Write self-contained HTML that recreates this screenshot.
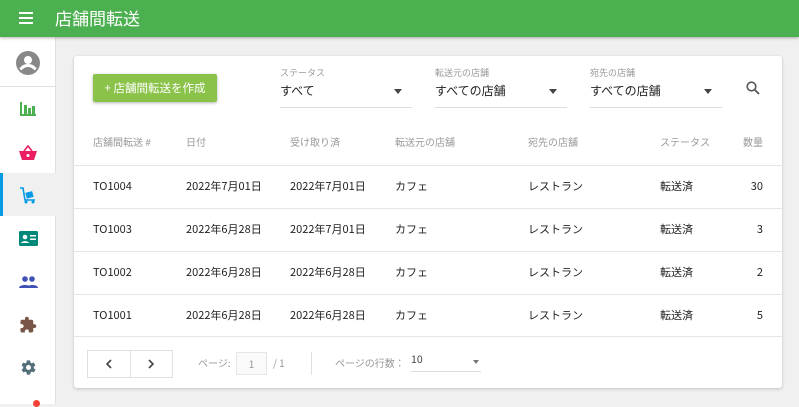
<!DOCTYPE html>
<html><head><meta charset="utf-8"><style>
*{box-sizing:border-box;margin:0;padding:0}
body{width:799px;height:404px;overflow:hidden;background:#f0f0f0;font-family:"Noto Sans CJK JP","Liberation Sans",sans-serif;position:relative;color:#333}
.hdr{position:absolute;left:0;top:0;width:799px;height:37px;background:#4caf50;box-shadow:0 1px 3px rgba(0,0,0,.3);z-index:2}
.hdr .t{position:absolute;left:55px;top:0;line-height:36px;color:#fff;font-size:17px}
.side{position:absolute;left:0;top:37px;width:56px;height:367px;background:#fff;border-right:1px solid #e0e0e0}
.si{position:absolute;left:0;width:56px;height:43px;display:flex;align-items:center;justify-content:center}
.card{position:absolute;left:74px;top:56px;width:708px;height:332px;background:#fff;border-radius:3px;box-shadow:0 1px 3px rgba(0,0,0,.2)}
.btn{position:absolute;left:19px;top:18px;width:124px;height:28px;background:#8bc34a;color:#fff;font-size:11.5px;line-height:28px;text-align:center;border-radius:2px;box-shadow:0 1px 3px rgba(0,0,0,.3)}
.sel{position:absolute;top:10px;width:132px;height:42px;border-bottom:1px solid #ddd}
.sel .l{font-size:9px;color:#999;line-height:14px}
.sel .v{font-size:12px;color:#222;line-height:18px;margin-top:2px}
.sel .a{position:absolute;right:10px;top:23px;border:4px solid transparent;border-top:5px solid #444;border-bottom:0}
.th{position:absolute;top:78px;font-size:10px;color:#999;line-height:16px}
.row{position:absolute;left:0;width:708px;height:43px;border-top:1px solid #e6e6e6;font-size:11px;color:#222}
.row span{position:absolute;top:0;line-height:41px}
.pg{position:absolute;font-size:10px;color:#999;line-height:14px}
</style></head><body>
<div class="hdr">
<svg style="position:absolute;left:19px;top:12px" width="14" height="12"><rect y="0" width="14" height="2" fill="#fff"/><rect y="5" width="14" height="2" fill="#fff"/><rect y="10" width="14" height="2" fill="#fff"/></svg>
<div class="t">店舗間転送</div></div>
<div class="side">
<div class="si" style="top:4px"><svg width="24" height="24" viewBox="0 0 24 24"><circle cx="12" cy="12" r="12" fill="#888"/><circle cx="12" cy="9" r="4" fill="#fff"/><path d="M4.5 18.5c2-3 4.5-4 7.5-4s5.5 1 7.5 4" stroke="#fff" stroke-width="3" fill="none"/></svg></div>
<div style="position:absolute;top:49px;left:0;width:56px;height:1px;background:#e0e0e0"></div>
<div class="si" style="top:50px"><svg width="18" height="16"><rect x="1" y="1" width="2" height="14" fill="#4caf50"/><rect x="1" y="13" width="16" height="2" fill="#4caf50"/><rect x="5" y="4" width="3" height="10" fill="#4caf50"/><rect x="9" y="7" width="3" height="7" fill="#4caf50"/><rect x="13" y="5" width="3" height="9" fill="#4caf50"/></svg></div>
<div class="si" style="top:94px"><svg width="18" height="16"><path d="M5 6L9 1L13 6" stroke="#e91e63" stroke-width="1.6" fill="none"/><path d="M0 6H18L15 15H3Z" fill="#e91e63"/><circle cx="9" cy="10.5" r="1.5" fill="#fff"/></svg></div>
<div class="si" style="top:136px;background:#f0f0f0"><div style="position:absolute;left:0;top:0;width:3px;height:43px;background:#039be5"></div><svg width="18" height="18"><path d="M1 2H4L6 14H16" stroke="#039be5" stroke-width="1.6" fill="none"/><rect x="7" y="6" width="7" height="6" fill="#039be5" transform="rotate(-15 10 9)"/><circle cx="7" cy="16" r="1.5" fill="#039be5"/><circle cx="14" cy="16" r="1.5" fill="#039be5"/></svg></div>
<div class="si" style="top:180px"><svg width="19" height="15"><rect width="19" height="15" rx="1.5" fill="#00897b"/><circle cx="6" cy="6" r="2.3" fill="#fff"/><path d="M2 12c1-2.5 7-2.5 8 0Z" fill="#fff"/><rect x="11" y="4" width="6" height="1.5" fill="#fff"/><rect x="11" y="7.5" width="6" height="1.5" fill="#fff"/></svg></div>
<div class="si" style="top:223px"><svg width="19" height="12"><circle cx="6" cy="3" r="2.8" fill="#3f51b5"/><circle cx="13" cy="3" r="2.8" fill="#3f51b5"/><path d="M0 12c0-4 12-4 12 0Z" fill="#3f51b5"/><path d="M8 12c0-4 11-4 11 0Z" fill="#3f51b5"/></svg></div>
<div class="si" style="top:266px"><svg width="18" height="18" viewBox="0 0 24 24"><path d="M20.5 11H19V7c0-1.1-.9-2-2-2h-4V3.5a2.5 2.5 0 0 0-5 0V5H4c-1.1 0-2 .9-2 2v3.8h1.5c1.5 0 2.7 1.2 2.7 2.7S5 16.2 3.5 16.2H2V20c0 1.1.9 2 2 2h3.8v-1.5c0-1.5 1.2-2.7 2.7-2.7s2.7 1.2 2.7 2.7V22H17c1.1 0 2-.9 2-2v-4h1.5a2.5 2.5 0 0 0 0-5z" fill="#795548"/></svg></div>
<div class="si" style="top:309px"><svg width="17" height="17" viewBox="0 0 24 24"><path d="M19.4 13c0-.3.1-.7.1-1s0-.7-.1-1l2.1-1.6c.2-.2.2-.4.1-.6l-2-3.5c-.1-.2-.4-.3-.6-.2l-2.5 1c-.5-.4-1.1-.7-1.700-1L14.4 2.4c0-.2-.2-.4-.5-.4h-4c-.2 0-.5.2-.5.4L9.1 5.1c-.6.3-1.2.6-1.7 1l-2.5-1c-.2-.1-.5 0-.6.2l-2 3.5c-.1.2-.1.5.1.6L4.6 11c0 .3-.1.7-.1 1s0 .7.1 1l-2.1 1.6c-.2.2-.2.4-.1.6l2 3.5c.1.2.4.3.6.2l2.5-1c.5.4 1.1.7 1.7 1l.4 2.7c0 .2.2.4.5.4h4c.2 0 .5-.2.5-.4l.4-2.7c.6-.3 1.2-.6 1.7-1l2.5 1c.2.1.5 0 .6-.2l2-3.5c.1-.2.1-.5-.1-.6zM12 15.5a3.5 3.5 0 1 1 0-7 3.5 3.5 0 0 1 0 7z" fill="#546e7a"/></svg></div>
<div style="position:absolute;left:33px;top:363px;width:7px;height:7px;border-radius:50%;background:#f44336"></div>
</div>
<div class="card">
<div class="btn">+ 店舗間転送を作成</div>
<div class="sel" style="left:206px"><div class="l">ステータス</div><div class="v">すべて</div><div class="a"></div></div>
<div class="sel" style="left:361px"><div class="l">転送元の店舗</div><div class="v">すべての店舗</div><div class="a"></div></div>
<div class="sel" style="left:516px"><div class="l">宛先の店舗</div><div class="v">すべての店舗</div><div class="a"></div></div>
<svg style="position:absolute;left:672px;top:25px" width="14" height="14"><circle cx="5.5" cy="5.5" r="4.3" stroke="#555" stroke-width="1.6" fill="none"/><path d="M8.5 8.5L13 13" stroke="#555" stroke-width="1.8"/></svg>
<div class="th" style="left:19px">店舗間転送 #</div>
<div class="th" style="left:112px">日付</div>
<div class="th" style="left:216px">受け取り済</div>
<div class="th" style="left:321px">転送元の店舗</div>
<div class="th" style="left:454px">宛先の店舗</div>
<div class="th" style="left:586px">ステータス</div>
<div class="th" style="right:19px">数量</div>
<div class="row" style="top:109px"><span style="left:19px">TO1004</span><span style="left:112px">2022年7月01日</span><span style="left:216px">2022年7月01日</span><span style="left:321px">カフェ</span><span style="left:454px">レストラン</span><span style="left:586px">転送済</span><span style="right:19px">30</span></div>
<div class="row" style="top:152px"><span style="left:19px">TO1003</span><span style="left:112px">2022年6月28日</span><span style="left:216px">2022年7月01日</span><span style="left:321px">カフェ</span><span style="left:454px">レストラン</span><span style="left:586px">転送済</span><span style="right:19px">3</span></div>
<div class="row" style="top:195px"><span style="left:19px">TO1002</span><span style="left:112px">2022年6月28日</span><span style="left:216px">2022年6月28日</span><span style="left:321px">カフェ</span><span style="left:454px">レストラン</span><span style="left:586px">転送済</span><span style="right:19px">2</span></div>
<div class="row" style="top:238px;border-bottom:1px solid #e6e6e6"><span style="left:19px">TO1001</span><span style="left:112px">2022年6月28日</span><span style="left:216px">2022年6月28日</span><span style="left:321px">カフェ</span><span style="left:454px">レストラン</span><span style="left:586px">転送済</span><span style="right:19px">5</span></div>
<div style="position:absolute;left:13px;top:294px;width:86px;height:28px;border:1px solid #e0e0e0"></div>
<div style="position:absolute;left:56px;top:294px;width:1px;height:28px;background:#e0e0e0"></div>
<svg style="position:absolute;left:31px;top:303px" width="8" height="10"><path d="M6 1L2 5L6 9" stroke="#444" stroke-width="1.6" fill="none"/></svg>
<svg style="position:absolute;left:73px;top:303px" width="8" height="10"><path d="M2 1L6 5L2 9" stroke="#444" stroke-width="1.6" fill="none"/></svg>
<div class="pg" style="left:124px;top:300px">ページ:</div>
<div style="position:absolute;left:162px;top:296px;width:31px;height:23px;border:1px solid #e6e6e6;background:#fafafa;font-size:10px;color:#999;text-align:center;line-height:21px">1</div>
<div class="pg" style="left:199px;top:300px">/ 1</div>
<div style="position:absolute;left:237px;top:296px;width:1px;height:23px;background:#e0e0e0"></div>
<div class="pg" style="left:261px;top:300px">ページの行数：</div>
<div style="position:absolute;left:337px;top:294px;width:70px;height:22px;border-bottom:1px solid #ddd;font-size:10.5px;color:#444;line-height:20px">10</div>
<div style="position:absolute;left:399px;top:304px;border:3px solid transparent;border-top:4px solid #777;border-bottom:0"></div>
</div>
</body></html>
